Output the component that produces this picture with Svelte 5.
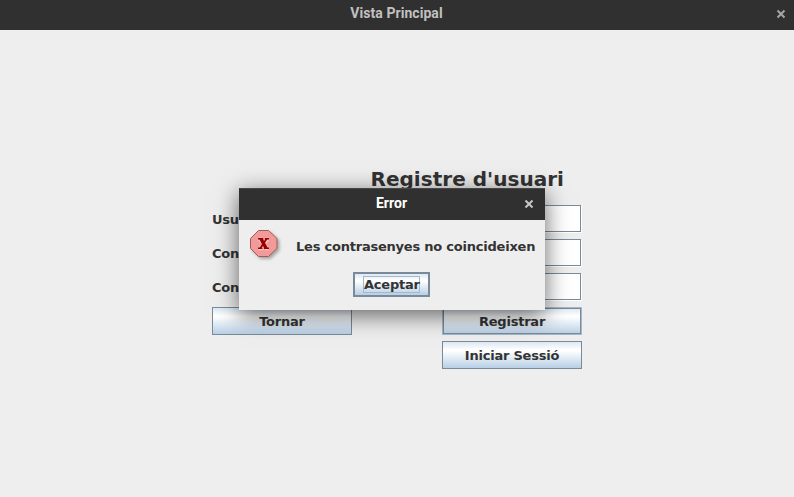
<script>
  const fields = ["Usuari", "Contrasenya", "Contrasenya"];
</script>

{#snippet cross()}
  <svg width="10" height="10" viewBox="0 0 10 10" aria-hidden="true">
    <path d="M1.5 1.5L8.5 8.5M8.5 1.5L1.5 8.5" />
  </svg>
{/snippet}

<div class="window">
  <header class="titlebar">
    <span class="caption">Vista Principal</span>
    <button class="close" aria-label="Tancar">{@render cross()}</button>
  </header>

  <main>
    <h1>Registre d'usuari</h1>
    <div class="form">
      {#each fields as label, i}
        <label for="field{i}">{label}</label>
        <input id="field{i}" />
      {/each}
      <button class="metal">Tornar</button>
      <button class="metal default">Registrar</button>
      <button class="metal second">Iniciar Sessió</button>
    </div>
  </main>

  <div class="dialog" role="alertdialog" aria-label="Error">
    <header class="titlebar">
      <span class="caption">Error</span>
      <button class="close" aria-label="Tancar">{@render cross()}</button>
    </header>
    <div class="message">
      <svg class="stop" width="34" height="34" viewBox="0 0 34 34" aria-hidden="true">
        <path class="octagon" d="M9.5 1.5h10l8.5 8v10l-8.5 8h-10l-8-8v-10z" />
        <path class="halo" d="M9.5 10.5h4.5M16 10.5h3.5M9.5 19.5h4M15.5 19.5h4M11.5 10.5L17.5 19.5M18 10.5L11.5 19.5" />
        <path class="gap" d="M14.6 9V11.5L15.2 12.4L15.6 11.5V9zM14 21V18.5L14.3 17.6L14.9 18.5V21z" />
        <path class="mark" d="M9 9.8h5.3M15.8 9.8h4.2M9 19.2h4.4M14.8 19.2h5.2" />
        <path class="bar" d="M11.8 9.5L17.2 19.5" />
        <path class="slash" d="M17.8 9.5L11.2 19.5" />
      </svg>
      <span>Les contrasenyes no coincideixen</span>
    </div>
    <div class="actions">
      <button class="metal accept"><span>Aceptar</span></button>
    </div>
  </div>
</div>

<style>
  .window {
    position: relative;
    width: 794px;
    height: 497px;
    overflow: hidden;
    background: #eeeeee;
    color: #333333;
    font: bold 13px "DejaVu Sans", sans-serif;
    letter-spacing: -0.22px;
  }
  .window * { box-sizing: border-box; }
  .titlebar {
    display: grid;
    grid-template-columns: 26px 1fr 26px;
    height: 30px;
    background: #303030;
    color: #c1c1c1;
    font: 700 14px/26px Roboto, sans-serif;
    letter-spacing: 0.05px;
    text-align: center;
  }
  .caption { grid-column: 2; margin-right: 1px; }
  .close {
    display: flex;
    align-items: center;
    justify-content: center;
    height: 28px;
    padding: 0;
    border: 0;
    background: none;
  }
  .close svg { fill: none; stroke: #a5a5a5; stroke-width: 2; }
  main { width: 370px; margin: 0 0 0 212px; padding-top: 137px; }
  h1 {
    margin: 0 18px 0 0;
    height: 38px;
    font-size: 20px;
    line-height: 24px;
    letter-spacing: 0.03px;
    text-align: right;
    white-space: nowrap;
  }
  .form {
    display: grid;
    grid-template-columns: 140px 140px;
    grid-auto-rows: 28px;
    column-gap: 90px;
    row-gap: 6px;
  }
  label { line-height: 29px; }
  input {
    width: 139px;
    height: 27px;
    margin: 0;
    padding: 2px;
    border: 1px solid #7a8a99;
    outline: 0;
    background: #fff;
    box-shadow: 1px 1px 0 #fff;
  }
  .metal {
    margin: 0;
    padding: 1px 0 0;
    border: 1px solid #7a8a99;
    border-radius: 0;
    background: linear-gradient(#dde8f3 0%, #fff 30%, #fff 34%, #b8cfe5 100%);
    color: #333;
    font: inherit;
    letter-spacing: inherit;
    line-height: 26px;
    text-align: center;
  }
  .default { box-shadow: inset 0 0 0 1px #7a8a99; border-color: #a3b8cc; }
  .second { grid-column: 2; }
  .dialog {
    position: absolute;
    left: 239px;
    top: 188px;
    width: 306px;
    height: 122px;
    background: #eeeeee;
    box-shadow: 0 5px 22px rgba(0, 0, 0, 0.6);
  }
  .dialog .titlebar {
    grid-template-columns: 32px 1fr 32px;
    height: 32px;
    border-top: 1px solid #474747;
    color: #fff;
    line-height: 28px;
  }
  .dialog .close { height: 30px; }
  .dialog .close svg { stroke: #c6c6c6; }
  .message { display: flex; height: 52px; padding: 9px 0 0 10px; }
  .message span { margin-left: 13px; line-height: 36px; white-space: nowrap; }
  .stop { fill: none; }
  .octagon { fill: #f09a9a; stroke: #a55a5a; filter: drop-shadow(2px 2px 1.5px rgba(0, 0, 0, 0.3)); }
  .halo { stroke: #ffcccc; stroke-width: 3.6; }
  .gap { fill: #ffcccc; }
  .mark { stroke: #990000; stroke-width: 1.4; }
  .bar { stroke: #990000; stroke-width: 3.4; }
  .slash { stroke: #990000; stroke-width: 1.9; }
  .actions { display: flex; padding-left: 114px; }
  .accept {
    display: flex;
    align-items: center;
    justify-content: center;
    width: 77px;
    height: 25px;
    padding: 0;
    border-width: 2px;
  }
  .accept span { width: 57px; height: 17px; border: 1px solid #a3b8cc; line-height: 15px; }
</style>
